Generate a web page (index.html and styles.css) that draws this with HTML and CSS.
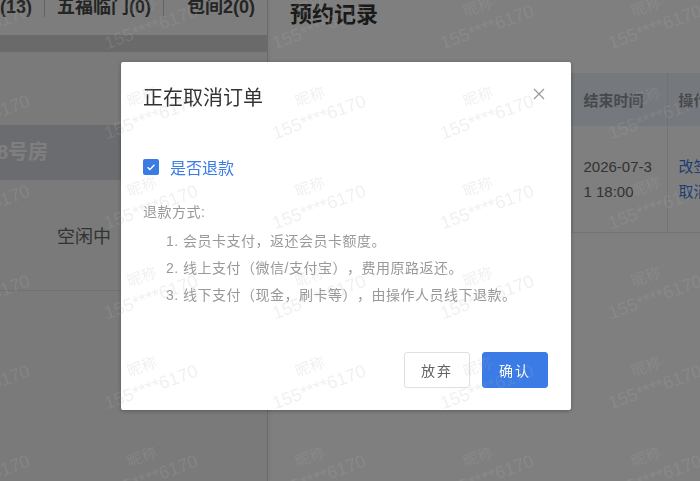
FILE: index.html
```html
<!DOCTYPE html>
<html lang="zh-CN">
<head>
    <meta charset="UTF-8">
    <meta name="viewport" content="width=device-width, initial-scale=1.0">
    <title>预约记录</title>
    <link rel="stylesheet" href="styles.css">
</head>
<body>
    <div class="app">
        <aside class="rooms">
            <div class="tabs">
                <span class="tab tab-first">(13)</span>
                <span class="tab">五福临门(0)</span>
                <span class="tab tab-wide">包间2(0)</span>
            </div>
            <div class="tabs-bar"></div>
            <div class="room-gap"></div>
            <div class="room-title">8号房</div>
            <div class="room-body">空闲中</div>
        </aside>
        <main class="records">
            <h2 class="records-title">预约记录</h2>
            <table class="records-table">
                <colgroup>
                    <col style="width: 140px">
                    <col style="width: 142px">
                    <col style="width: 95px">
                    <col style="width: 103px">
                </colgroup>
                <thead>
                    <tr>
                        <th>房间</th>
                        <th>开始时间</th>
                        <th>结束时间</th>
                        <th>操作</th>
                    </tr>
                </thead>
                <tbody>
                    <tr>
                        <td>8号房</td>
                        <td>2026-07-31 16:00</td>
                        <td>2026-07-31 18:00</td>
                        <td><a class="link">改签</a><br><a class="link">取消</a></td>
                    </tr>
                </tbody>
            </table>
        </main>
    </div>

    <div class="mask">
        <div class="dialog">
            <div class="dialog-header">
                <span class="dialog-title">正在取消订单</span>
                <a class="dialog-close">
                    <svg width="12" height="12" viewBox="0 0 12 12">
                        <path d="M1 1l10 10M11 1L1 11" stroke="#999" stroke-width="1.2" fill="none"/>
                    </svg>
                </a>
            </div>
            <div class="dialog-body">
                <label class="refund-check">
                    <span class="checkbox">
                        <svg width="16" height="16" viewBox="0 0 16 16">
                            <path d="M4.5 8.3l2.4 2.3 4.6-4.8" stroke="#fff" stroke-width="1.4" fill="none"/>
                        </svg>
                    </span>
                    <span class="refund-label">是否退款</span>
                </label>
                <p class="refund-tip">退款方式:</p>
                <ol class="refund-list">
                    <li>会员卡支付，返还会员卡额度。</li>
                    <li>线上支付（微信/支付宝），费用原路返还。</li>
                    <li>线下支付（现金，刷卡等），由操作人员线下退款。</li>
                </ol>
            </div>
            <div class="dialog-footer">
                <button class="btn">放弃</button>
                <button class="btn btn-primary">确认</button>
            </div>
        </div>
    </div>

    <div class="watermark">
        <div class="watermark-grid" id="watermark"></div>
    </div>

    <script>
        // fill the page with the user watermark
        var grid = document.getElementById('watermark')
        for (var i = 0; i < 42; i++) {
            var cell = document.createElement('div')
            cell.className = 'mark'
            cell.innerHTML = '<span class="mark-name">昵称</span><span class="mark-phone">155****6170</span>'
            grid.appendChild(cell)
        }
    </script>
</body>
</html>
```

FILE: styles.css
```css
html, body {
    margin: 0;
    padding: 0;
}

body {
    font-family: "Liberation Sans", "Noto Sans CJK SC", sans-serif;
    background-color: #fff;
    color: #333;
    overflow: hidden;
    text-spacing-trim: space-all;
}

.app {
    display: flex;
    height: 100vh;
}

/* room list on the left */
.rooms {
    width: 267px;
    flex-shrink: 0;
    background-color: #f4f5f7;
    border-right: 1px solid #d6d6d6;
    box-shadow: 2px 0 4px rgba(0, 0, 0, 0.05);
}
.tabs {
    display: flex;
    height: 35px;
    background-color: #fafafa;
}
.tab {
    height: 20px;
    line-height: 20px;
    margin-top: -3px;
    padding: 0 12px;
    border-left: 1px solid #c8c8c8;
    font-size: 18px;
    font-weight: bold;
    color: #4a4a4a;
    white-space: nowrap;
}
.tab-first {
    border-left: 0;
    padding-left: 0;
}
.tab-wide {
    min-width: 90px;
    text-align: center;
}
.tabs-bar {
    height: 17px;
    background-color: #d5d5d5;
}
.room-gap {
    height: 73px;
}
.room-title {
    height: 55px;
    line-height: 55px;
    background-color: #d7d9df;
    color: #fff;
    font-size: 20px;
    font-weight: bold;
    text-indent: -3px;
}
.room-body {
    height: 110px;
    display: flex;
    align-items: center;
    padding-left: 57px;
    border-bottom: 1px solid #e3e3e3;
    font-size: 18px;
    color: #666;
}

/* booking records */
.records {
    flex: 1;
    padding-left: 22px;
    overflow: hidden;
}
.records-title {
    margin: 0;
    font-size: 22px;
    line-height: 30px;
    font-weight: bold;
    color: #333;
}
.records-table {
    margin-top: 43px;
    width: 480px;
    border-collapse: collapse;
    table-layout: fixed;
    font-size: 15px;
}
.records-table th {
    height: 53px;
    padding: 0 11px;
    text-align: left;
    background-color: #eaf1f9;
    color: #8f9399;
    font-weight: bold;
    border-right: 1px solid #dde4ec;
}
.records-table td {
    height: 106px;
    padding: 0 11px;
    line-height: 25px;
    color: #666;
    word-break: break-all;
    border-bottom: 1px solid #e6e9ef;
    border-right: 1px solid #e6e9ef;
}
.link {
    color: #3a7be6;
    cursor: pointer;
}

/* cancel dialog */
.mask {
    position: fixed;
    inset: 0;
    display: flex;
    justify-content: center;
    align-items: flex-start;
    padding: 62px 8px 0 0;
    background-color: rgba(0, 0, 0, 0.5);
}
.dialog {
    width: 450px;
    background-color: #fff;
    border-radius: 2px;
    box-shadow: 0 1px 4px rgba(0, 0, 0, 0.3);
}
.dialog-header {
    position: relative;
    padding: 24px 22px 0;
}
.dialog-title {
    display: block;
    font-size: 20px;
    line-height: 24px;
    color: #333;
}
.dialog-close {
    position: absolute;
    top: 26px;
    right: 26px;
    width: 12px;
    height: 12px;
    cursor: pointer;
}
.dialog-close svg {
    display: block;
}
.dialog-body {
    padding: 0 22px;
}
.refund-check {
    display: flex;
    align-items: center;
    height: 20px;
    margin-top: 47px;
}
.checkbox {
    width: 16px;
    height: 16px;
    border-radius: 2px;
    background-color: #3a7be6;
}
.checkbox svg {
    display: block;
}
.refund-label {
    margin-left: 11px;
    font-size: 16px;
    color: #3a7be6;
}
.refund-tip {
    margin: 22px 0 0;
    font-size: 14px;
    line-height: 27px;
    letter-spacing: 0.5px;
    color: #999;
}
.refund-list {
    margin: 2px 0 0;
    padding-left: 23px;
    list-style-position: inside;
    font-size: 14px;
    line-height: 27px;
    letter-spacing: 0.5px;
    color: #999;
}
.dialog-footer {
    display: flex;
    justify-content: flex-end;
    gap: 12px;
    padding: 43px 23px 22px;
}
.btn {
    height: 36px;
    padding: 0 16px;
    font-family: inherit;
    font-size: 14px;
    letter-spacing: 2px;
    border: 1px solid #dcdfe6;
    border-radius: 3px;
    background-color: #fff;
    color: #606266;
    cursor: pointer;
}
.btn-primary {
    background-color: #3a7be6;
    border-color: #3a7be6;
    color: #fff;
}

/* watermark layer */
.watermark {
    position: fixed;
    inset: 0;
    overflow: hidden;
    pointer-events: none;
    z-index: 10;
}
.watermark-grid {
    display: grid;
    grid-template-columns: repeat(6, 168px);
    grid-auto-rows: 90px;
    margin: -12px 0 0 -68px;
}
.mark {
    padding-top: 10px;
    color: rgba(175, 175, 175, 0.19);
}
.mark-name {
    display: block;
    width: max-content;
    margin-left: 27px;
    font-size: 15px;
    line-height: 18px;
    transform: rotate(-20deg);
}
.mark-phone {
    display: block;
    width: max-content;
    margin-left: 2px;
    font-size: 18px;
    line-height: 22px;
    transform: rotate(-20deg);
}
```
